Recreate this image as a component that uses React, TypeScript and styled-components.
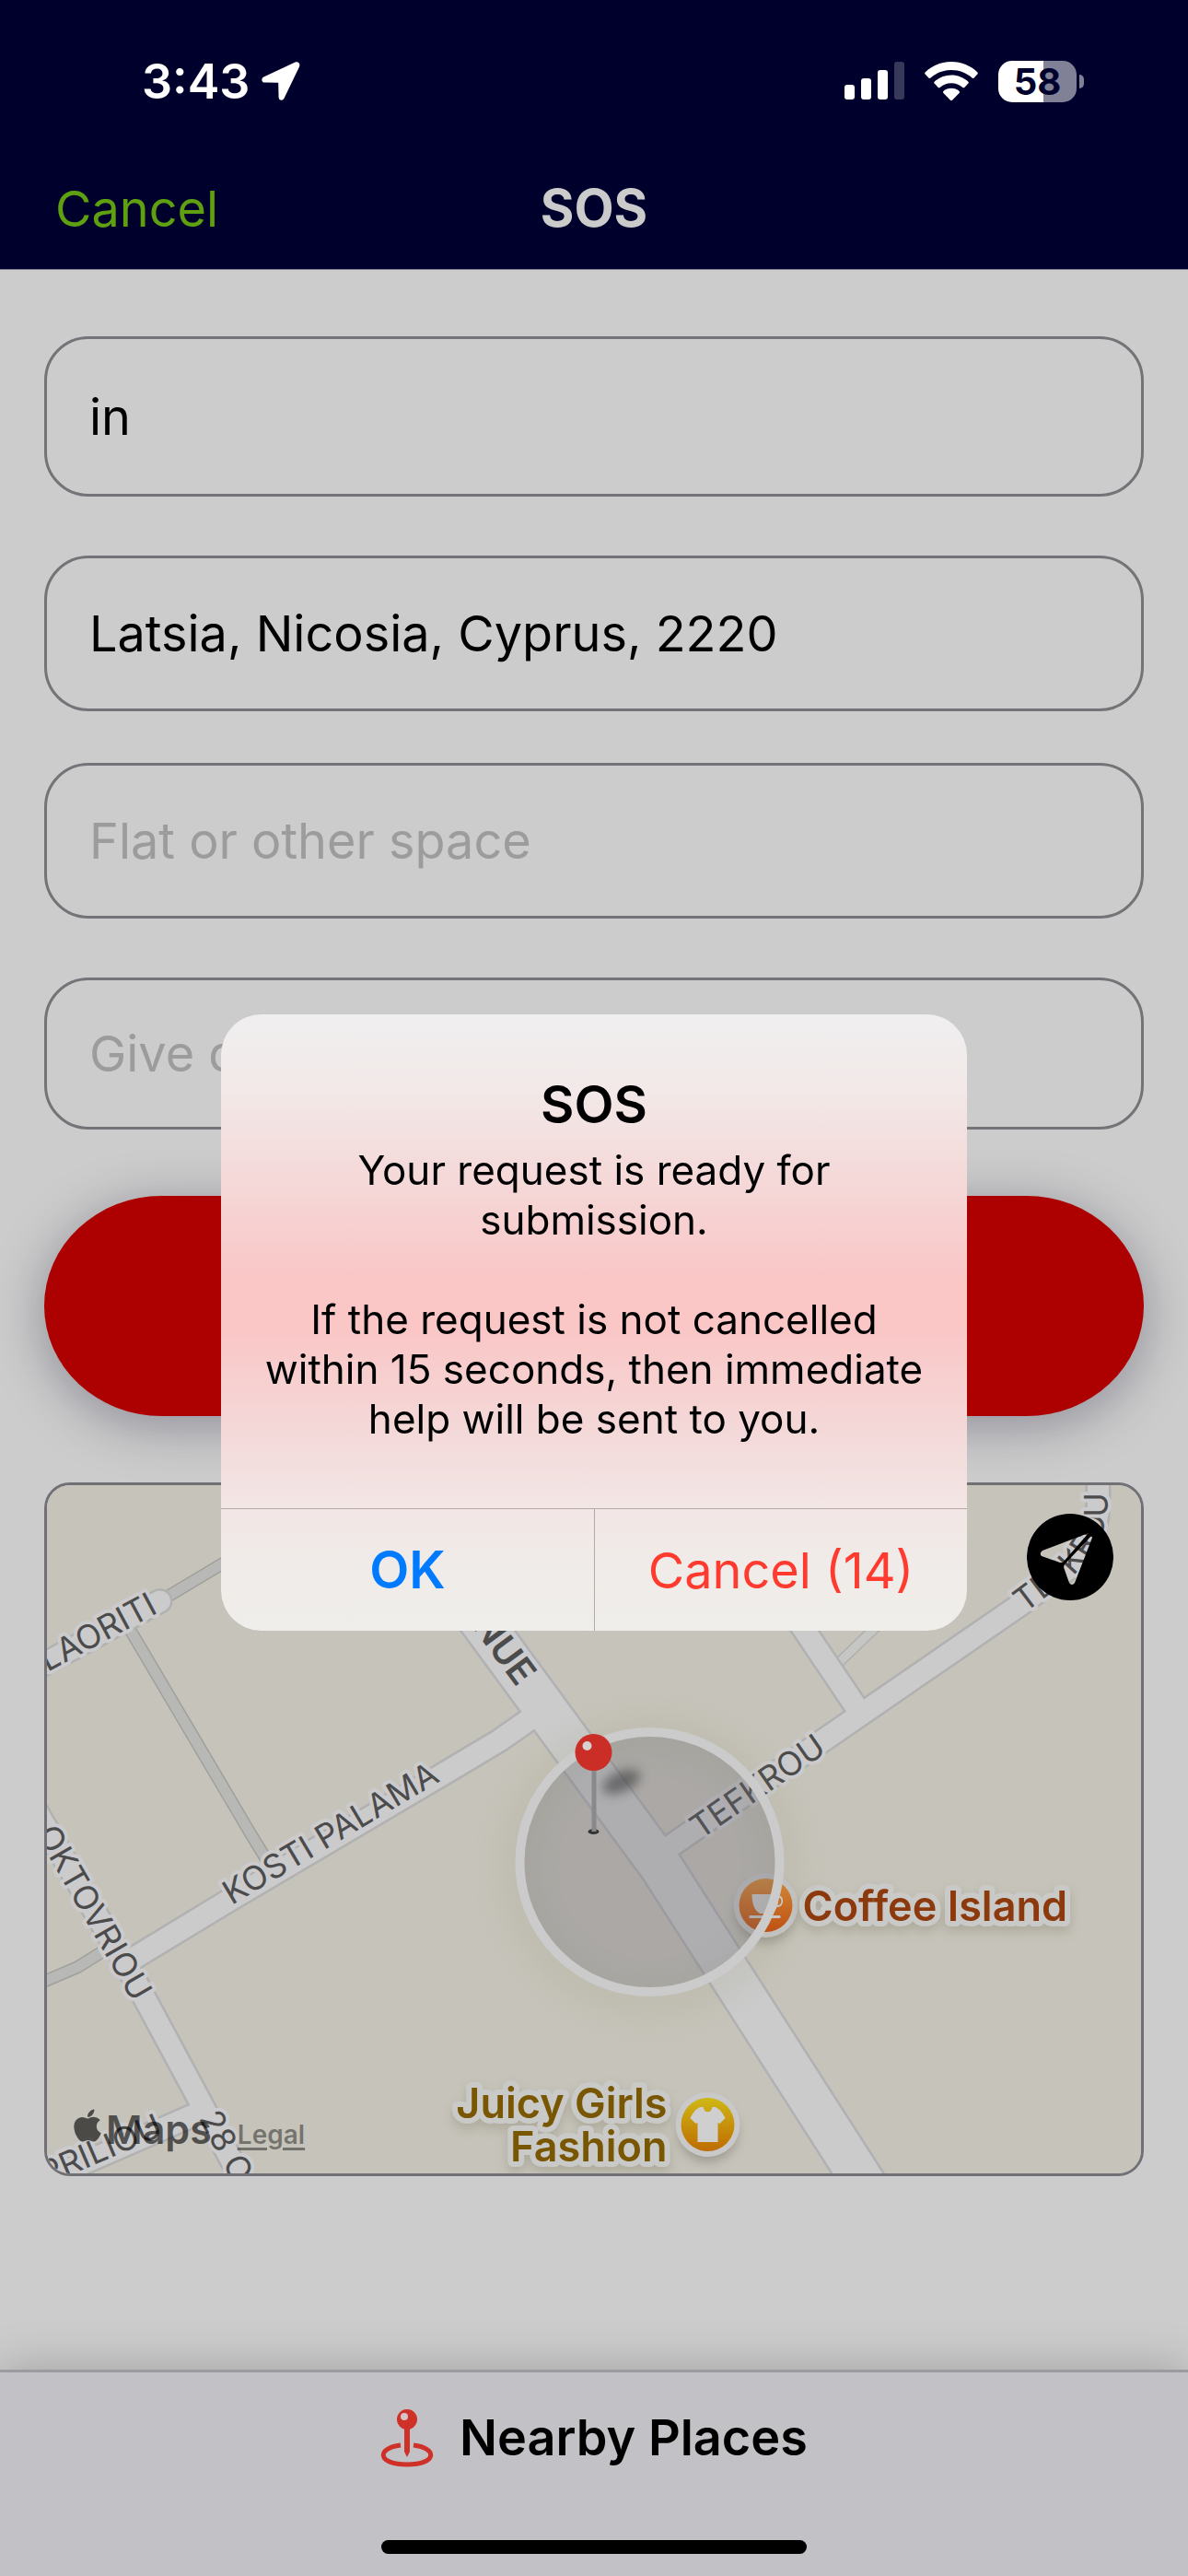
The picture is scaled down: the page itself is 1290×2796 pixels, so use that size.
import { useState } from 'react'
import { FaApple } from 'react-icons/fa'
import styled, { createGlobalStyle } from 'styled-components'

type FieldProps = {
  label: string
  height: number
  initialValue?: string
  placeholder?: string
}

const Field = ({ label, height, initialValue = '', placeholder }: FieldProps) => {
  const [value, setValue] = useState(initialValue)

  return (
    <StyledInput
      $height={height}
      aria-label={label}
      placeholder={placeholder}
      value={value}
      onChange={(event) => setValue(event.target.value)}
    />
  )
}

const StatusBar = () => (
  <StyledStatusBar>
    <StyledStatusGroup $gap={13}>
      <StyledTime>3:43</StyledTime>
      <svg width="42" height="42" viewBox="0 0 42 42" fill="#fff" aria-hidden="true">
        <path d="M36.5 .6 2.4 16.6C-.8 18.2-.2 22.6 3.4 22.6L18.2 22.8 18.6 38.4C18.8 42.2 23 42.8 24.6 39.4L41 5.4C42.4 2.2 39.8-.8 36.5 .6Z" />
      </svg>
    </StyledStatusGroup>

    <StyledStatusGroup $gap={22}>
      <svg width="65" height="42" viewBox="0 0 65 42" fill="#fff" aria-hidden="true">
        <rect x="0" y="25" width="11" height="16" rx="3" />
        <rect x="18" y="18" width="11" height="23" rx="3" />
        <rect x="36" y="9" width="11" height="32" rx="3" />
        <rect x="54" y="0" width="11" height="41" rx="3" opacity=".22" />
      </svg>
      <svg width="58" height="43" viewBox="0 0 58 43" fill="#fff" aria-hidden="true">
        <path d="M29 0C18 0 8 4.300.6 11.400Q-.3 12.500.6 13.500L4.600 17.700Q5.500 18.500 6.500 17.600C12.500 12 20.400 9 29 9S45.500 12 51.500 17.600Q52.500 18.500 53.400 17.700L57.400 13.500Q58.300 12.500 57.400 11.400C50 4.300 40 0 29 0Z" />
        <path d="M29 14.500C22 14.500 15.500 17.200 10.600 21.700Q9.700 22.700 10.600 23.600L14.800 27.900Q15.700 28.700 16.600 27.900C20 25 24.200 23.300 29 23.300S38 25 41.400 27.900Q42.300 28.700 43.200 27.900L47.400 23.600Q48.300 22.700 47.400 21.700C42.500 17.200 36 14.500 29 14.500Z" />
        <path d="M29 28.700C25.700 28.700 22.700 29.900 20.400 31.900Q19.500 32.900 20.400 33.900L28 41.700Q29 42.600 30 41.700L37.600 33.900Q38.500 32.900 37.600 31.900C35.300 29.900 32.300 28.700 29 28.700Z" />
      </svg>
      <StyledBattery>
        <StyledBatteryBody>58</StyledBatteryBody>
        <StyledBatteryTip />
      </StyledBattery>
    </StyledStatusGroup>
  </StyledStatusBar>
)

/* Streets are drawn twice, a wide casing first and the surface over it */
const alleys = [
  'M-8 541 34 523 66 503',
  'M86 149 222 379 241 410',
  'M123 126 220 68',
]

const streets = [
  'M783 98 880 242',
  'M-10 198 123 126',
  'M660 404 842 278 1057 130 1100 98C1130 76 1141 54 1142 20V-20',
  'M548 234 522 256 492 277 425 317 196 452 84 520',
  'M164 682-20 762',
  'M-12 352 98 541 169 673 220 769',
]

const avenue = 'M350-18 480 159 668 415 913 797'

const labels = [
  { id: 'laoriti', path: 'M-122 269 122 138', text: 'LAORITI', end: true },
  { id: 'palama', path: 'M201 456 443 312', text: 'KOSTI PALAMA' },
  { id: 'oktovriou', path: 'M-56 302 94 562', text: 'OKTOVRIOU', end: true },
  { id: 'oktovriou-2', path: 'M165 687 284 911', text: '28 O' },
  { id: 'apriliou', path: 'M-86 797 128 705', text: 'PRILIOU', end: true },
  { id: 'tefkrou', path: 'M710 385 882 266', text: 'TEFKROU' },
  { id: 'tefkrou-2', path: 'M1062 139 1106 106C1132 84 1150 58 1152 24V-60', text: 'TEFKROU' },
]

const StreetMap = () => (
  <StyledMapDrawing viewBox="0 0 1189 747" preserveAspectRatio="xMidYMid slice" role="img" aria-label="Map">
    <defs>
      <linearGradient id="coffee" x1="0" y1="0" x2="0" y2="1">
        <stop offset="0" stopColor="#d88a38" />
        <stop offset="1" stopColor="#c44c0a" />
      </linearGradient>
      <linearGradient id="fashion" x1="0" y1="0" x2="0" y2="1">
        <stop offset="0" stopColor="#cfb816" />
        <stop offset="1" stopColor="#be6c00" />
      </linearGradient>
      <filter id="soft" x="-50%" y="-50%" width="200%" height="200%">
        <feGaussianBlur stdDeviation="6" />
      </filter>
      <filter id="wide" x="-50%" y="-50%" width="200%" height="200%">
        <feGaussianBlur stdDeviation="18" />
      </filter>
      {labels.map(({ id, path }) => (
        <path key={id} id={id} d={path} />
      ))}
      <path id="avenue" d="M361 18 511 220" />
    </defs>

    <rect width="1189" height="747" fill="#c6c3ba" />

    <g fill="none" strokeLinejoin="round">
      {alleys.map((d) => (
        <path key={d} d={d} stroke="#a0a09b" strokeWidth="14" />
      ))}
      {alleys.map((d) => (
        <path key={d} d={d} stroke="#b8b8b6" strokeWidth="11" />
      ))}
      <path d="M934 122 858 195" stroke="#afafae" strokeWidth="12" />
      <path d="M934 122 858 195" stroke="#c6c6c5" strokeWidth="9" />
      {streets.map((d) => (
        <path key={d} d={d} stroke="#b1b1b2" strokeWidth="28" strokeLinecap="round" />
      ))}
      <path d={avenue} stroke="#b1b1b4" strokeWidth="50" />
      {streets.map((d) => (
        <path key={d} d={d} stroke="#cbcbcb" strokeWidth="23" strokeLinecap="round" />
      ))}
      <path d={avenue} stroke="#cbcbcb" strokeWidth="45" />
    </g>

    {labels.map(({ id, text, end }) => (
      <StyledStreetName key={id} textAnchor={end ? 'end' : 'start'}>
        <textPath href={`#${id}`} startOffset={end ? '100%' : '0'}>
          {text}
        </textPath>
      </StyledStreetName>
    ))}
    <StyledAvenueName textAnchor="end">
      <textPath href="#avenue" startOffset="100%">
        AVENUE
      </textPath>
    </StyledAvenueName>

    {/* Coffee Island */}
    <circle cx="781" cy="464" r="33" fill="#77776a" opacity=".5" filter="url(#soft)" />
    <circle cx="781" cy="456" r="35" fill="#c7c7c8" />
    <circle cx="781" cy="456" r="29" fill="url(#coffee)" />
    <g fill="#cfcfcf">
      <path d="M766 444H795V446C801 444 802 459 793 458 791 463 788 465 786 465H775C768 462 766 452 766 444Z" />
      <rect x="763" y="467" width="34" height="3" rx="1" />
    </g>
    <path d="M795 448C799 447 799 456 794 456Z" fill="#cf6d20" />
    <StyledPlaceName x="821" y="473" $color="#8c390d">
      Coffee Island
    </StyledPlaceName>

    {/* Juicy Girls Fashion */}
    <circle cx="718" cy="702" r="33" fill="#77776a" opacity=".5" filter="url(#soft)" />
    <circle cx="718" cy="694" r="35" fill="#c9c9c9" />
    <circle cx="718" cy="694" r="29" fill="url(#fashion)" />
    <path
      fill="#cfcfcf"
      d="M710 675H713C714 682 722 682 723 675H726C731 677 734 681 737 687L731 693 729 692V713H707V692L705 693 699 687C702 681 705 677 710 675Z"
    />
    <StyledPlaceName textAnchor="end" $color="#785602">
      <tspan x="674" y="687">
        Juicy Girls
      </tspan>
      <tspan x="674" y="734">
        Fashion
      </tspan>
    </StyledPlaceName>

    {/* Accuracy circle */}
    <circle cx="655" cy="415" r="146" fill="none" stroke="#8a8560" strokeWidth="20" opacity=".22" filter="url(#wide)" />
    <circle cx="655" cy="409" r="140" fill="#64646e" fillOpacity=".28" />
    <circle cx="655" cy="409" r="141" fill="none" stroke="#cbcbcb" strokeWidth="10" />

    {/* Pin */}
    <ellipse cx="624" cy="322" rx="22" ry="11" fill="#3c3c40" opacity=".6" transform="rotate(-24 624 322)" filter="url(#soft)" />
    <ellipse cx="594" cy="376" rx="6" ry="3" fill="#333" />
    <rect x="592" y="306" width="5" height="70" fill="#88898c" />
    <circle cx="594" cy="290" r="20" fill="#cb2e27" />
    <circle cx="587" cy="283" r="5" fill="#d6d2d2" />
  </StyledMapDrawing>
)

const App = () => {
  return (
    <>
      <GlobalStyle />
      <StyledPage>
        <StyledHeader>
          <StatusBar />
          <StyledNavBar>
            <StyledNavButton type="button">Cancel</StyledNavButton>
            <StyledNavTitle>SOS</StyledNavTitle>
          </StyledNavBar>
        </StyledHeader>

        <StyledForm>
          <StyledFields>
            <Field label="Location" height={174} initialValue="in" />
            <Field label="Address" height={169} initialValue="Latsia, Nicosia, Cyprus, 2220" />
          </StyledFields>
          <StyledFields>
            <Field label="Flat or other space" height={169} placeholder="Flat or other space" />
            <Field label="Details" height={165} placeholder="Give details" />
          </StyledFields>

          <StyledSosButton type="button" aria-label="Send SOS" />

          <StyledMap>
            <StreetMap />
            <StyledMapCredit>
              <FaApple size={40} aria-hidden="true" />
              <StyledMapBrand>Maps</StyledMapBrand>
              <StyledLegalLink href="#legal">Legal</StyledLegalLink>
            </StyledMapCredit>
            <StyledLocateButton type="button" aria-label="Show my location">
              <svg width="94" height="94" viewBox="0 0 94 94" aria-hidden="true">
                <path
                  fillRule="evenodd"
                  d="M47 0A47 47 0 1 1 47 94A47 47 0 1 1 47 0ZM67 21 17 40Q13 43 16 46L36 53 39 53ZM70 24 41 55 40 58 46 75Q49 79 52 75L71 26Z"
                />
              </svg>
            </StyledLocateButton>
          </StyledMap>
        </StyledForm>

        <StyledFooter>
          <StyledNearbyButton type="button">
            <svg width="58" height="68" viewBox="-2 -4 58 68" aria-hidden="true">
              <path d="M20 39C-6 42-6 60 27 60S60 42 34 39" fill="none" stroke="#cf3027" strokeWidth="5" />
              <path d="M24 18H30V46L27 52 24 46Z" fill="#cf3027" />
              <circle cx="27" cy="11" r="11" fill="#cf3027" />
              <circle cx="24" cy="8" r="4" fill="#d3c5c8" />
            </svg>
            Nearby Places
          </StyledNearbyButton>
          <StyledHomeIndicator />
        </StyledFooter>
      </StyledPage>

      <StyledBackdrop>
        <StyledDialog role="alertdialog" aria-labelledby="dialog-title" aria-describedby="dialog-text">
          <StyledDialogBody>
            <StyledDialogTitle id="dialog-title">SOS</StyledDialogTitle>
            <StyledDialogText id="dialog-text">
              {'Your request is ready for\nsubmission.\n\nIf the request is not cancelled\nwithin 15 seconds, then immediate\nhelp will be sent to you.'}
            </StyledDialogText>
          </StyledDialogBody>
          <StyledDialogActions>
            <StyledDialogButton type="button" $color="#007aff" $bold>
              OK
            </StyledDialogButton>
            <StyledDialogButton type="button" $color="#ff3b30">
              Cancel (14)
            </StyledDialogButton>
          </StyledDialogActions>
        </StyledDialog>
      </StyledBackdrop>
    </>
  )
}

export default App

const GlobalStyle = createGlobalStyle`
  * {
    box-sizing: border-box;
  }

  body {
    margin: 0;
    background: #ccc;
    font-family: Inter, 'Liberation Sans', sans-serif;
  }

  button,
  input {
    margin: 0;
    font-family: inherit;
  }

  button {
    padding: 0;
    border: 0;
    background: none;
    cursor: pointer;
  }
`

const StyledPage = styled.div`
  display: flex;
  flex-direction: column;
  min-height: 100vh;
`

const StyledHeader = styled.header`
  background: #00002c;
  border-bottom: 1px solid #85858f;
`

const StyledStatusBar = styled.div`
  display: flex;
  align-items: center;
  justify-content: space-between;
  height: 176px;
  padding: 0 113px 0 154px;
`

const StyledStatusGroup = styled.div<{ $gap: number }>`
  display: flex;
  align-items: center;
  gap: ${({ $gap }) => $gap}px;
`

const StyledTime = styled.span`
  color: #fff;
  font-size: 52px;
  font-weight: 600;
`

const StyledBattery = styled.div`
  display: flex;
  align-items: center;
  gap: 3px;
`

const StyledBatteryBody = styled.span`
  width: 85px;
  border-radius: 15px;
  background: linear-gradient(90deg, #fff 58%, #808097 58%);
  color: #00002c;
  font-size: 40px;
  font-weight: 700;
  line-height: 45px;
  text-align: center;
`

const StyledBatteryTip = styled.span`
  width: 5px;
  height: 15px;
  border-radius: 0 8px 8px 0;
  background: #808097;
`

const StyledNavBar = styled.div`
  display: grid;
  grid-template-columns: 1fr auto 1fr;
  align-items: center;
  height: 116px;
  padding: 0 60px 16px;
`

const StyledNavButton = styled.button`
  justify-self: start;
  color: #5ea010;
  font-size: 54px;
`

const StyledNavTitle = styled.h1`
  margin: 0;
  color: #cbcbcb;
  font-size: 56px;
  font-weight: 700;
`

const StyledForm = styled.main`
  display: flex;
  flex-direction: column;
  gap: 56px;
  padding: 72px 48px;
`

const StyledFields = styled.div`
  display: flex;
  flex-direction: column;
  gap: 64px;
`

const StyledInput = styled.input<{ $height: number }>`
  width: 100%;
  height: ${({ $height }) => $height}px;
  padding: 0 46px;
  border: 3px solid #737378;
  border-radius: 48px;
  outline: none;
  background: transparent;
  color: #000;
  font-size: 54px;

  &::placeholder {
    color: #9c9c9c;
    opacity: 1;
  }
`

const StyledSosButton = styled.button`
  height: 239px;
  margin: 16px 0;
  border-radius: 128px / 120px;
  background: #ad0000;
  box-shadow: 0 10px 56px rgba(20, 20, 50, 0.34);
`

const StyledMap = styled.section`
  position: relative;
  overflow: hidden;
  height: 753px;
  border: 3px solid #707075;
  border-radius: 28px;
`

const StyledMapDrawing = styled.svg`
  display: block;
  width: 100%;
  height: 100%;
`

const StyledStreetName = styled.text`
  fill: #4b4b4b;
  stroke: #cbcbcd;
  stroke-width: 8px;
  stroke-linejoin: round;
  paint-order: stroke;
  font-size: 36px;
`

const StyledAvenueName = styled(StyledStreetName)`
  font-size: 40px;
  font-weight: 600;
`

const StyledPlaceName = styled.text<{ $color: string }>`
  fill: ${({ $color }) => $color};
  stroke: #c9c9c7;
  stroke-width: 12px;
  stroke-linejoin: round;
  paint-order: stroke;
  filter: drop-shadow(0 6px 6px rgba(120, 115, 90, 0.3));
  font-size: 45px;
  font-weight: 600;
`

const StyledMapCredit = styled.div`
  position: absolute;
  left: 24px;
  bottom: 22px;
  display: flex;
  align-items: baseline;
  color: rgba(0, 0, 0, 0.62);
`

const StyledMapBrand = styled.span`
  font-size: 43px;
  font-weight: 600;
`

const StyledLegalLink = styled.a`
  margin-left: 28px;
  color: rgba(0, 0, 0, 0.42);
  font-size: 28px;
  font-weight: 600;
  text-decoration-thickness: 3px;
  text-underline-offset: 4px;
`

const StyledLocateButton = styled.button`
  position: absolute;
  top: 31px;
  right: 30px;
  border-radius: 50%;

  svg {
    display: block;
  }
`

const StyledFooter = styled.footer`
  display: flex;
  flex-direction: column;
  align-items: center;
  justify-content: space-between;
  height: 224px;
  margin-top: auto;
  padding: 36px 0 24px;
  border-top: 3px solid #9c9ca0;
  background: #c2c1c6;
  box-shadow: 0 0 48px rgba(0, 0, 0, 0.22);
`

const StyledNearbyButton = styled.button`
  display: flex;
  align-items: center;
  gap: 28px;
  color: #000;
  font-size: 54px;
  font-weight: 600;
`

const StyledHomeIndicator = styled.div`
  width: 462px;
  height: 15px;
  border-radius: 8px;
  background: #000;
`

const StyledBackdrop = styled.div`
  position: fixed;
  inset: 0;
  display: flex;
  align-items: center;
  justify-content: center;
  padding-top: 75px;
`

const StyledDialog = styled.div`
  overflow: hidden;
  width: 810px;
  border-radius: 44px;
  background: linear-gradient(
    #f0eff0,
    #f2e9e8 12%,
    #f5d7d7 28%,
    #fac6c6 43%,
    #fac6c6 51%,
    #f4d9d9 68%,
    #f2e6e5 80%,
    #f0ebe8 88%,
    #efeeea
  );
`

const StyledDialogBody = styled.div`
  display: flex;
  flex-direction: column;
  gap: 10px;
  padding: 64px 16px 70px;
  text-align: center;
`

const StyledDialogTitle = styled.h2`
  margin: 0;
  font-size: 56px;
  font-weight: 600;
  line-height: 68px;
`

const StyledDialogText = styled.p`
  margin: 0;
  font-size: 44px;
  line-height: 54px;
  white-space: pre-line;
`

const StyledDialogActions = styled.div`
  display: grid;
  grid-template-columns: 1fr 1fr;
  border-top: 1px solid #b8a8a8;
`

const StyledDialogButton = styled.button<{ $color: string; $bold?: boolean }>`
  height: 132px;
  color: ${({ $color }) => $color};
  font-size: ${({ $bold }) => ($bold ? 56 : 54)}px;
  font-weight: ${({ $bold }) => ($bold ? 600 : 400)};

  & + & {
    border-left: 1px solid #b8a8a8;
  }
`
